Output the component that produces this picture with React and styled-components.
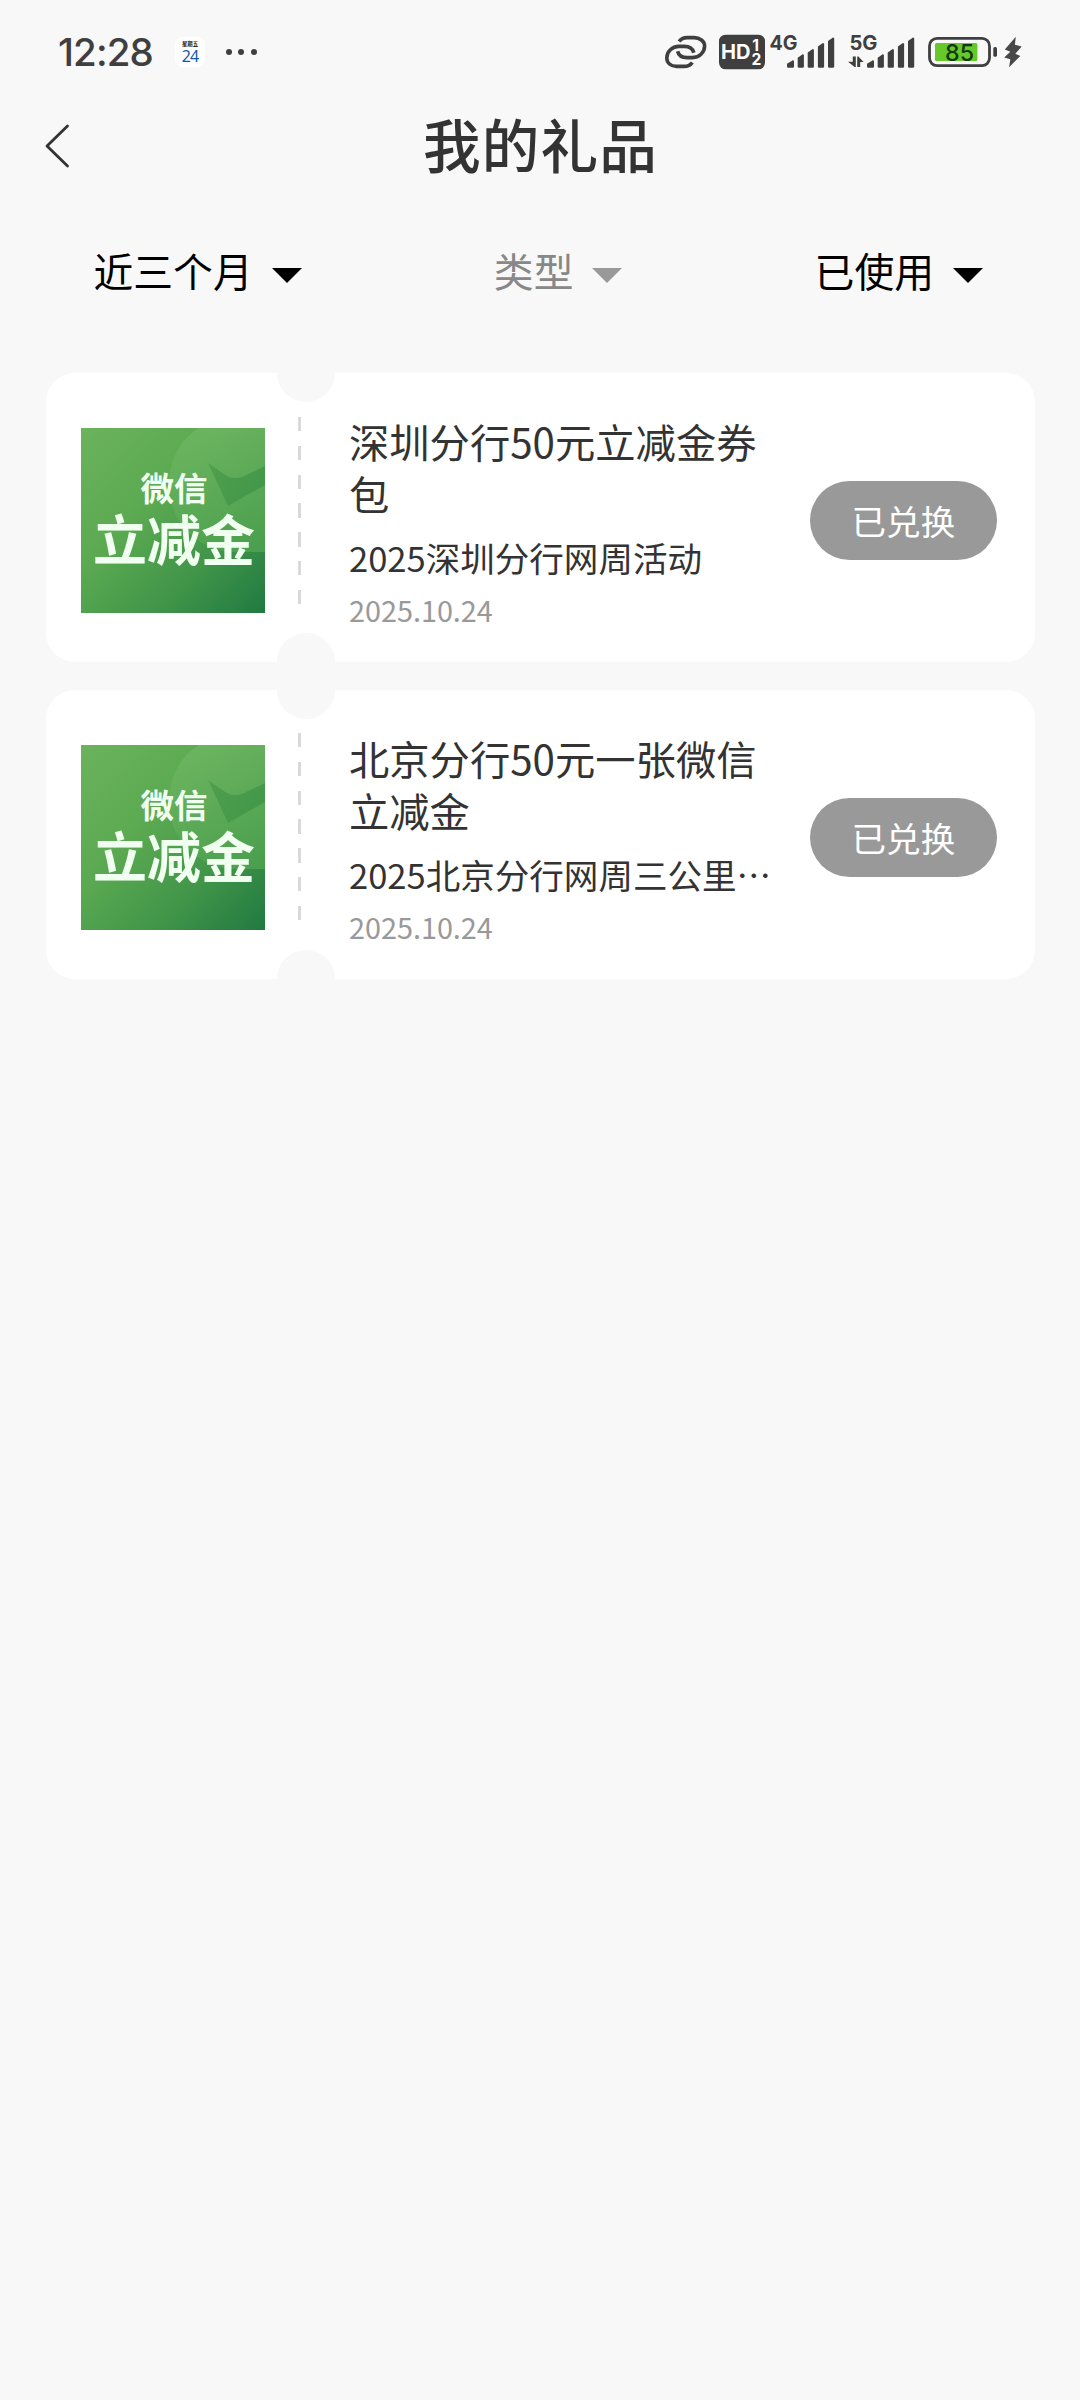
import React from "react";
import styled, { createGlobalStyle } from "styled-components";

const ink = "#3f3f3f";

const GlobalStyle = createGlobalStyle`
  * { box-sizing: border-box; }
  html, body { margin: 0; background: #f8f8f8; }
  body { font-family: "Noto Sans CJK SC", "Noto Sans", sans-serif; color: #333; }
`;

const Page = styled.main`
  width: 1080px;
  min-height: 2400px;
  background: #f8f8f8;
  overflow: hidden;
`;

const StatusBar = styled.div`
  height: 104px;
  padding: 0 58px 0 58px;
  display: flex;
  align-items: center;
  justify-content: space-between;
`;

const StatusGroup = styled.div`
  display: flex;
  align-items: center;
`;

const Clock = styled.span`
  width: 96px;
  font: 500 38.5px/52px "Inter", sans-serif;
  letter-spacing: -0.9px;
  color: ${ink};
  white-space: nowrap;
`;

const CalendarBadge = styled.div`
  width: 30px;
  height: 30px;
  margin-left: 21px;
  border-radius: 8px;
  background: #fff;
  display: flex;
  flex-direction: column;
  align-items: center;
`;

const CalendarWeekday = styled.span`
  margin-top: 4px;
  font-size: 5.4px;
  line-height: 6px;
  font-weight: 700;
  color: #111;
`;

const CalendarDay = styled.span`
  margin-top: 2px;
  font: 400 16px/15px "Noto Sans", sans-serif;
  letter-spacing: -0.9px;
  color: #1557b0;
`;

const Dots = styled.div`
  display: flex;
  gap: 6.4px;
  margin-left: 21px;
`;

const Dot = styled.i`
  width: 6px;
  height: 6px;
  border-radius: 50%;
  background: ${ink};
`;

const StatusIcon = styled.svg`
  display: block;
  height: 36px;
  width: ${(p) => p.$w}px;
  margin-left: ${(p) => p.$gap || 0}px;
  overflow: visible;
  font-family: "Inter", sans-serif;
`;

const Header = styled.header`
  height: 82px;
  display: grid;
  grid-template-columns: 110px 1fr 109px;
  align-items: center;
`;

const BackButton = styled.button`
  height: 82px;
  padding: 0 0 0 41px;
  border: 0;
  background: none;
  display: flex;
  align-items: center;
`;

const Title = styled.h1`
  margin: 0;
  text-align: center;
  font-size: 57.6px;
  line-height: 78px;
  height: 82px;
  font-weight: 500;
  letter-spacing: 1.2px;
  color: #333;
`;

const Filters = styled.nav`
  height: 187px;
  padding: 55px 97px 0 93.5px;
  display: flex;
  justify-content: space-between;
  align-items: flex-start;
`;

const Filter = styled.div`
  display: flex;
  align-items: center;
  gap: 19px;
  font-size: 39.8px;
  line-height: 58px;
  color: ${(p) => (p.$muted ? "#888" : "#000")};
`;

const Caret = styled.i`
  margin-top: 11px;
  border: 15.5px solid transparent;
  border-top-color: ${(p) => (p.$muted ? "#999" : "#000")};
  border-bottom: 0;
`;

const GiftList = styled.section`
  padding: 0 45px 0 46px;
  display: flex;
  flex-direction: column;
  gap: 28px;
`;

const Card = styled.article`
  position: relative;
  height: 288.8px;
  padding: 0 38px 0 35px;
  border-radius: 28.8px;
  background: #fff;
  display: flex;
`;

const Notch = styled.i`
  position: absolute;
  left: 231px;
  ${(p) => (p.$bottom ? "bottom" : "top")}: -28.8px;
  width: 57.6px;
  height: 57.6px;
  border-radius: 50%;
  background: #f8f8f8;
`;

const Cover = styled.div`
  width: 184px;
  height: 185px;
  margin-top: 55px;
`;

const Perforation = styled.div`
  margin: 43.6px 0 0 33.4px;
  width: 2.9px;
  height: 188px;
  background: repeating-linear-gradient(#d9d9d9 0 14.4px, transparent 14.4px 28.8px);
`;

const Details = styled.div`
  width: 432px;
  margin-left: 47.7px;
  padding-top: 42px;
`;

const GiftName = styled.h2`
  margin: 0;
  font-size: 40.32px;
  line-height: 51.84px;
  font-weight: 400;
`;

const Campaign = styled.p`
  margin: 12.6px 0 0;
  font-size: 34.56px;
  line-height: 52px;
  white-space: nowrap;
  overflow: hidden;
`;

const GiftDate = styled.time`
  display: block;
  margin-top: 1px;
  font-size: 28.8px;
  line-height: 52px;
  color: #999;
`;

const Status = styled.button`
  width: 187.2px;
  height: 79.2px;
  margin: 108px 0 0 auto;
  padding: 0;
  border: 0;
  border-radius: 40px;
  background: #999;
  color: #fff;
  font: 400 34.56px/79px "Noto Sans CJK SC", sans-serif;
`;

function LinkIcon() {
  return (
    <StatusIcon $w={44} viewBox="2.4 0 44 36">
      <g fill="none" stroke={ink} strokeWidth="3.6">
        <path d="M16.5 7.5C18.5 4.5 21.5 3.6 24.5 3.6H31.5C37 3.6 42 7.2 42 12C42 18.5 36.5 23.6 30 23.6H24.5C19.5 23.6 16 21.3 15 17.2" />
        <path d="M29.7 28.5C27.7 31.5 24.7 32.4 21.7 32.4H13.7C8.2 32.4 4.2 28.8 4.2 24C4.2 17.5 9.7 12.4 16.2 12.4H21.7C26.7 12.4 30.2 14.7 31.2 18.8" />
      </g>
    </StatusIcon>
  );
}

function HdIcon() {
  return (
    <StatusIcon $w={46} $gap={10.3} viewBox="0 0 46 36">
      <rect y="0.7" width="46" height="34.6" rx="6.5" fill={ink} />
      <g fill="#fff" fontWeight="700">
        <text x="2" y="25.2" fontSize="19.4" textLength="29.5" lengthAdjust="spacingAndGlyphs">HD</text>
        <text x="33.2" y="16.8" fontSize="15.6">1</text>
        <text x="32.6" y="31" fontSize="15.6">2</text>
      </g>
    </StatusIcon>
  );
}

function SignalIcon({ label, gap, arrows }) {
  const bars = [[17, 26.2, 7], [27.7, 20.3, 6.2], [37.7, 15, 6.2], [47.9, 9, 6.2], [58, 3.4, 6.2]];
  return (
    <StatusIcon $w={65} $gap={gap} viewBox="0 0 65 36" fill={ink}>
      <text x="-0.5" y="15.7" fontSize="19.8" fontWeight="700" textLength="28" lengthAdjust="spacingAndGlyphs">{label}</text>
      {bars.map(([x, y, w]) => (
        <path key={x} d={`M${x} ${y + 3.5}L${x + w - 1.2} ${y}Q${x + w} ${y} ${x + w} ${y + 1.2}V32.6Q${x + w} 33.8 ${x + w - 1.2} 33.8H${x + 1.2}Q${x} 33.8 ${x} 32.6Z`} />
      ))}
      {arrows && <path d="M2.8 22.5H5.8V33H4.6L-2 27.8H2.8ZM7.2 33V22.5H8.4L13.6 28H10.2V33Z" />}
    </StatusIcon>
  );
}

function BatteryIcon() {
  return (
    <StatusIcon $w={69} $gap={13.4} viewBox="0 0 69 36">
      <rect x="1.5" y="4.4" width="60" height="27.2" rx="7.5" fill="none" stroke={ink} strokeWidth="2.8" />
      <rect x="7" y="9" width="42.4" height="18" rx="1.5" fill="#66c92a" />
      <rect x="65.3" y="13" width="3.7" height="9.7" rx="1.5" fill={ink} />
      <text x="17" y="26.5" fontSize="23.2" fontWeight="500" fill="#12380c" textLength="29" lengthAdjust="spacingAndGlyphs">85</text>
    </StatusIcon>
  );
}

function BoltIcon() {
  return (
    <StatusIcon $w={18} $gap={7} viewBox="0 0 18 36" fill="#484848">
      <path d="M11.8 2.7L0.8 15.5L6.3 17.7L0.2 23.6L6.3 25.2L5.1 33.3L16.3 22L11.3 19.8L17.7 12.5L10.9 10.8Z" />
    </StatusIcon>
  );
}

const VoucherSvg = styled.svg`
  display: block;
  font-family: "Noto Sans CJK SC", sans-serif;
`;

function VoucherArt() {
  return (
    <VoucherSvg width="184" height="185" viewBox="0 0 184 185">
      <defs>
        <linearGradient id="voucherBase" x1="0" y1="0" x2="1" y2="1">
          <stop offset="0" stopColor="#6bb35c" />
          <stop offset="0.4" stopColor="#5aa951" />
          <stop offset="0.7" stopColor="#419549" />
          <stop offset="1" stopColor="#207a41" />
        </linearGradient>
        <linearGradient id="voucherDisc" x1="0.3" y1="0" x2="0.5" y2="1">
          <stop offset="0" stopColor="#75b968" stopOpacity="0.6" />
          <stop offset="1" stopColor="#52a651" stopOpacity="0.75" />
        </linearGradient>
        <linearGradient id="voucherTick" x1="0" y1="0" x2="1" y2="0.4">
          <stop offset="0" stopColor="#4f9f4e" />
          <stop offset="1" stopColor="#439849" />
        </linearGradient>
      </defs>
      <rect width="184" height="185" fill="url(#voucherBase)" />
      <path d="M118 0C98 12 88 34 88 57C88 95 118 124 155 124H184V0Z" fill="url(#voucherDisc)" />
      <path d="M127 35L145 47.5Q153 52 162 48.5L184 38V57L147 78Z" fill="url(#voucherTick)" />
      <g fill="#f1fff0" textAnchor="middle" fontWeight="700">
        <text x="93" y="73.2" fontSize="33.5">微信</text>
        <text x="93" y="132.6" fontSize="54">立减金</text>
      </g>
    </VoucherSvg>
  );
}

const filters = [
  { label: "近三个月" },
  { label: "类型", muted: true },
  { label: "已使用" },
];

const gifts = [
  { name: "深圳分行50元立减金券包", campaign: "2025深圳分行网周活动", date: "2025.10.24" },
  { name: "北京分行50元一张微信立减金", campaign: "2025北京分行网周三公里…", date: "2025.10.24" },
];

export default function App() {
  return (
    <Page lang="zh-CN">
      <GlobalStyle />
      <StatusBar>
        <StatusGroup>
          <Clock>12:28</Clock>
          <CalendarBadge>
            <CalendarWeekday>星期五</CalendarWeekday>
            <CalendarDay>24</CalendarDay>
          </CalendarBadge>
          <Dots><Dot /><Dot /><Dot /></Dots>
        </StatusGroup>
        <StatusGroup>
          <LinkIcon />
          <HdIcon />
          <SignalIcon label="4G" gap={5.5} />
          <SignalIcon label="5G" gap={14.3} arrows />
          <BatteryIcon />
          <BoltIcon />
        </StatusGroup>
      </StatusBar>
      <Header>
        <BackButton aria-label="返回">
          <svg width="30" height="48" viewBox="0 0 30 48" fill="none" stroke="#333" strokeWidth="2.8" strokeLinecap="round" strokeLinejoin="round">
            <path d="M26.5 5L6 25L26.5 45" />
          </svg>
        </BackButton>
        <Title>我的礼品</Title>
      </Header>
      <Filters>
        {filters.map((f) => (
          <Filter key={f.label} $muted={f.muted}>
            {f.label}
            <Caret $muted={f.muted} />
          </Filter>
        ))}
      </Filters>
      <GiftList>
        {gifts.map((g) => (
          <Card key={g.name}>
            <Notch />
            <Notch $bottom />
            <Cover><VoucherArt /></Cover>
            <Perforation />
            <Details>
              <GiftName>{g.name}</GiftName>
              <Campaign>{g.campaign}</Campaign>
              <GiftDate>{g.date}</GiftDate>
            </Details>
            <Status>已兑换</Status>
          </Card>
        ))}
      </GiftList>
    </Page>
  );
}
